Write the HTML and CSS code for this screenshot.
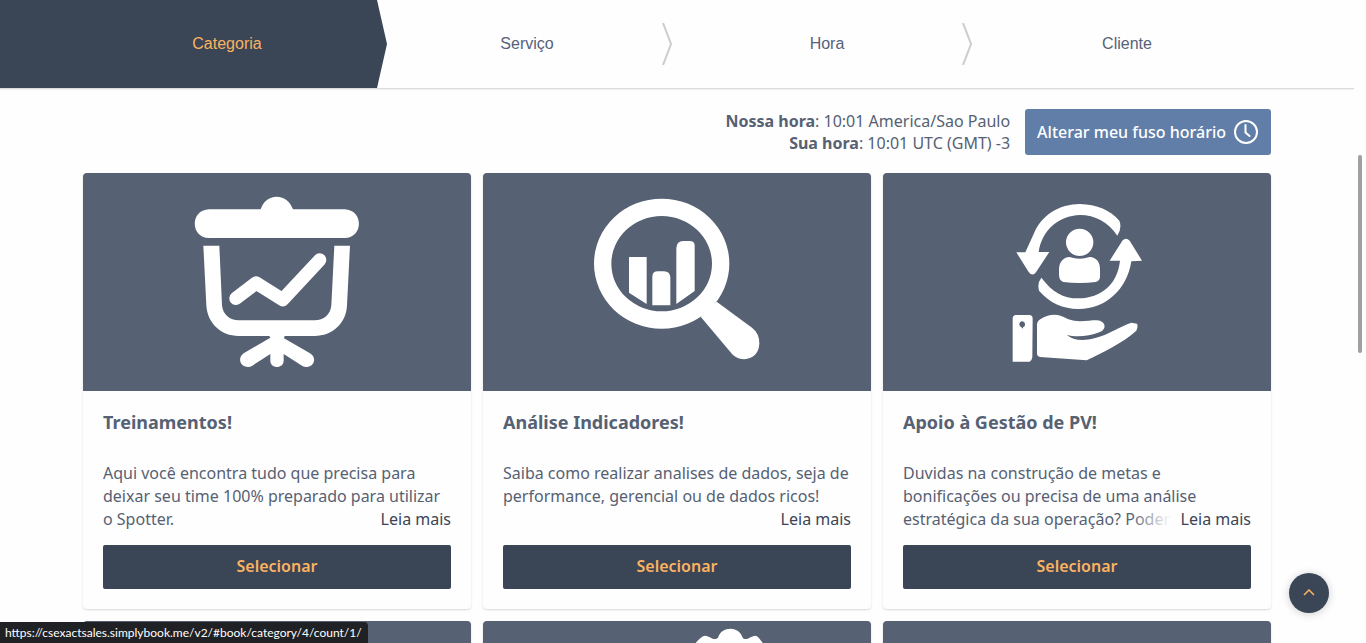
FILE: index.html
```html
<!DOCTYPE html>
<html lang="pt-BR">
<head>
    <meta charset="UTF-8">
    <meta name="viewport" content="width=device-width, initial-scale=1.0">
    <title>Agendamento</title>
    <link rel="stylesheet" href="styles.css">
</head>
<body>
    <div class="page">
        <header class="header">
            <nav class="steps">
                <a href="#category" class="step active">Categoria</a>
                <a href="#service" class="step">Serviço
                    <svg class="divider" viewBox="0 0 10 42"><path d="M1 0L9 21L1 42"/></svg>
                </a>
                <a href="#time" class="step">Hora
                    <svg class="divider" viewBox="0 0 10 42"><path d="M1 0L9 21L1 42"/></svg>
                </a>
                <a href="#client" class="step">Cliente</a>
            </nav>
        </header>

        <main class="content">
            <div class="timezone">
                <div class="times">
                    <div><b>Nossa hora</b>: 10:01 America/Sao Paulo</div>
                    <div><b>Sua hora</b>: 10:01 UTC (GMT) -3</div>
                </div>
                <button type="button" class="tz-btn">
                    Alterar meu fuso horário
                    <svg class="clock" viewBox="0 0 24 24"><circle cx="12" cy="12" r="11"/><path d="M11.500 5V12.500L15.500 16"/></svg>
                </button>
            </div>

            <div class="cards">
                <article class="card">
                    <svg class="cover" viewBox="-261 -21 1164 654">
                        <path d="M117 88H272C279 65 297 50 320 50C343 50 361 65 369 88H524C581 90 581 172 524 174H117C60 172 60 90 117 88Z"/>
                        <path d="M100 197H148L156 376C158 404 180 421 206 421H434C461 421 482 404 484 376L493 197H540L531 376C529 430 487 468 434 468H344L342 475L420 520C444 535 429 563 409 561Q402 561 396 557L341 522V542C341 567 301 567 301 542V522L247 557Q241 561 234 561C211 561 201 535 221 520L301 473L298 468H206C153 468 112 430 109 376Z"/>
                        <path class="line" d="M198 355L258 309L338 359L449 240"/>
                    </svg>
                    <div class="body">
                        <h2>Treinamentos!</h2>
                        <div class="desc">
                            <p>Aqui você encontra tudo que precisa para deixar seu time 100% preparado para utilizar o Spotter.</p>
                            <a href="#" class="more">Leia mais</a>
                        </div>
                        <button type="button" class="select">Selecionar</button>
                    </div>
                </article>

                <article class="card">
                    <svg class="cover" viewBox="-261 -21 1164 654">
                        <path fill-rule="evenodd" d="M72 251A203 195 0 1 0 478 251A203 195 0 1 0 72 251ZM124 251A151 143 0 0 1 426 251A151 143 0 0 1 124 251Z"/>
                        <path d="M440 365L546 443Q568 460 568 490C568 535 520 552 488 524L392 410Z"/>
                        <path d="M177 231H230V372L177 338ZM247 376V290Q247 274 264 274H282Q300 274 301 292V376ZM319 372V205Q320 183 340 183H358Q374 183 374 196V333Z"/>
                    </svg>
                    <div class="body">
                        <h2>Análise Indicadores!</h2>
                        <div class="desc">
                            <p>Saiba como realizar analises de dados, seja de performance, gerencial ou de dados ricos!</p>
                            <a href="#" class="more">Leia mais</a>
                        </div>
                        <button type="button" class="select">Selecionar</button>
                    </div>
                </article>

                <article class="card">
                    <svg class="cover" viewBox="-291 -21 1164 654">
                        <circle cx="299" cy="187" r="41"/>
                        <path d="M269 231Q299 241 328 231C352 232 361 249 360 270V290Q360 302 347 306Q299 312 250 306Q238 302 237 285V268C237 247 249 232 269 231Z"/>
                        <path d="M109 217H136L162 160C185 105 238 72 300 72C350 73 392 91 418 122Q427 142 412 167C386 127 344 105 300 105C236 107 186 150 176 216H208L169 275Q158 292 146 276Z"/>
                        <path d="M184 293C218 337 249 355 294 355C365 354 412 313 420 242H389L428 181Q438 171 449 182L486 242L454 244C441 331 374 388 295 387C249 386 209 369 177 332Q171 309 184 293Z"/>
                        <path fill-rule="evenodd" d="M106 405H148Q158 405 158 416L157 532Q155 543 149 545H98V416Q98 407 106 405ZM127 424Q118 425 118 434Q119 440 124 441L127 446L130 441Q136 439 135 432Q134 425 127 424Z"/>
                        <path d="M171 433Q172 422 182 417C216 397 239 404 265 418C292 428 323 421 351 421C378 423 382 449 358 457C327 468 289 474 260 464C278 481 309 484 343 475C386 464 421 439 454 428L471 431Q475 438 469 452C425 491 371 515 320 541L180 531Q171 530 171 520Z"/>
                    </svg>
                    <div class="body">
                        <h2>Apoio à Gestão de PV!</h2>
                        <div class="desc">
                            <p>Duvidas na construção de metas e bonificações ou precisa de uma análise estratégica da sua operação? Podemos</p>
                            <a href="#" class="more">Leia mais</a>
                        </div>
                        <button type="button" class="select">Selecionar</button>
                    </div>
                </article>

                <article class="card">
                    <svg class="cover" viewBox="0 0 388 218"></svg>
                </article>
                <article class="card">
                    <svg class="cover" viewBox="-561 63 1164 654">
                        <path d="M70 138Q92 108 105 107C122 109 132 124 144 113C150 94 164 86 182 86C200 87 212 96 218 113C229 125 240 108 256 107C267 109 273 123 285 138V200H70Z"/>
                    </svg>
                </article>
                <article class="card">
                    <svg class="cover" viewBox="0 0 388 218"></svg>
                </article>
            </div>
        </main>
    </div>

    <button type="button" class="to-top" aria-label="Topo">
        <svg viewBox="0 0 12 8"><path d="M1 6L6 1L11 6"/></svg>
    </button>
    <div class="scroll-thumb"></div>
    <div class="status">https://csexactsales.simplybook.me/v2/#book/category/4/count/1/</div>
</body>
</html>
```
FILE: styles.css
```css
* {
    box-sizing: border-box;
}
body {
    margin: 0;
    height: 100vh;
    overflow: hidden;
    background: #fefefe;
    color: #566173;
    font: 16px/22px "Noto Sans", sans-serif;
}
button {
    border: 0;
    font: inherit;
    cursor: pointer;
}
a {
    color: inherit;
    text-decoration: none;
}
.page {
    height: 100%;
    padding-right: 12px;
    overflow: hidden;
}
.header {
    overflow: hidden;
    border-bottom: 1px solid #dcdcdc;
    box-shadow: 0 1px 1px #f0f0f0;
}
.steps {
    display: flex;
    max-width: 1200px;
    margin: 0 auto;
    font-family: "Liberation Sans", Arial, sans-serif;
}
.step {
    position: relative;
    flex: 1;
    height: 88px;
    line-height: 88px;
    text-align: center;
    color: #56617a;
}
.step.active {
    background: #3a4556;
    color: #fbb360;
    box-shadow: -200px 0 #3a4556;
}
.step.active::after {
    content: "";
    position: absolute;
    top: 0;
    left: 100%;
    width: 10px;
    height: 100%;
    background: #3a4556;
    clip-path: polygon(0 0, 100% 50%, 0 100%);
}
.divider {
    position: absolute;
    top: 23px;
    right: 5px;
    width: 10px;
    height: 42px;
    fill: none;
    stroke: #ccc;
    stroke-width: 2;
}
.content {
    max-width: 1200px;
    margin: 0 auto;
    padding: 20px 6px;
}
.timezone {
    display: flex;
    justify-content: flex-end;
    align-items: center;
    gap: 15px;
    margin-bottom: 18px;
}
.times {
    text-align: right;
}
.tz-btn {
    display: flex;
    align-items: center;
    gap: 8px;
    height: 46px;
    padding: 0 13px 0 12px;
    border-radius: 3px;
    background: #607ea8;
    color: #fff;
    font-weight: 500;
}
.clock {
    width: 24px;
    height: 24px;
    fill: none;
    stroke: #fff;
    stroke-width: 2;
    stroke-linecap: round;
}
.cards {
    display: grid;
    grid-template-columns: repeat(3, 1fr);
    gap: 12px;
}
.card {
    border-radius: 4px;
    overflow: hidden;
    background: #fefefe;
    box-shadow: 0 1px 2px rgba(0, 0, 0, .15);
}
.cover {
    display: block;
    width: 100%;
    background: #566173;
    fill: #fff;
}
.cover .line {
    fill: none;
    stroke: #fff;
    stroke-width: 40;
    stroke-linecap: round;
    stroke-linejoin: round;
}
.body {
    padding: 20px;
}
.body h2 {
    margin: 0 0 28px;
    font-size: 18px;
    line-height: 23px;
}
.desc {
    position: relative;
    height: 69px;
    margin-bottom: 14px;
    overflow: hidden;
    line-height: 23px;
}
.desc p {
    margin: 0;
}
/* fades out the last line under the link */
.more {
    position: absolute;
    right: 0;
    bottom: 0;
    padding-left: 50px;
    background: linear-gradient(to right, rgba(254, 254, 254, 0), #fefefe 40px);
    color: #3a4556;
}
.select {
    display: block;
    width: 100%;
    height: 44px;
    padding: 0 0 2px;
    border-radius: 2px;
    background: #3a4556;
    color: #fbb360;
    font-weight: 600;
}
.to-top {
    position: fixed;
    right: 37px;
    bottom: 30px;
    display: flex;
    align-items: center;
    justify-content: center;
    width: 40px;
    height: 40px;
    padding: 0;
    border-radius: 50%;
    background: #3a4556;
    box-shadow: 0 1px 8px rgba(0, 0, 0, .2);
}
.to-top svg {
    width: 12px;
    height: 8px;
    fill: none;
    stroke: #fbb360;
    stroke-width: 1.5;
}
.scroll-thumb {
    position: fixed;
    top: 155px;
    right: 4px;
    width: 4px;
    height: 198px;
    border-radius: 2px;
    background: #a0a0a0;
}
.status {
    position: fixed;
    left: 0;
    bottom: 0;
    height: 21px;
    padding: 0 6px 0 5px;
    border-top-right-radius: 4px;
    background: #202124;
    color: #fff;
    font: 12px/21px Lato, sans-serif;
}
```
